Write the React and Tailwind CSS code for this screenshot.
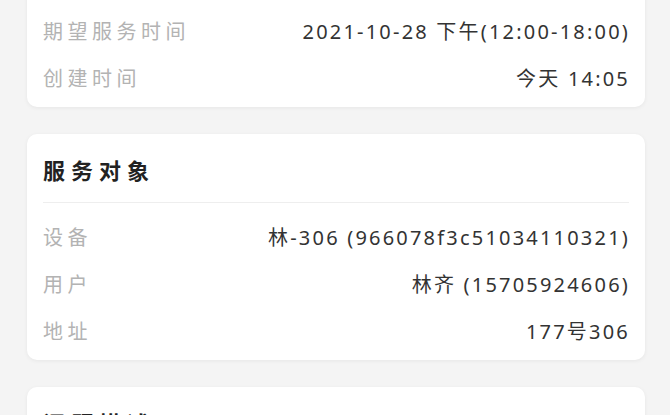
import React from 'react';

const font = { fontFamily: '"Noto Sans", "Noto Sans CJK SC", sans-serif' };

function Row({ label, value }) {
  return (
    <div className="flex h-[47px] items-center justify-between">
      <span className="text-[20px] tracking-[4.5px] text-[#b3b3b3]">{label}</span>
      <span className="-mr-[1px] text-[20px] tracking-[2.2px] text-[#333333]">{value}</span>
    </div>
  );
}

function Card({ title, children, className = '' }) {
  return (
    <div className={`rounded-[10px] bg-white px-4 shadow-[0_1px_4px_rgba(0,0,0,0.06)] ${className}`}>
      {title && (
        <div className="border-b border-[#eeeeee] pt-[18px] pb-[14px]">
          <h3 className="h-9 text-[22px] leading-9 font-bold tracking-[6px] text-[#222222]">{title}</h3>
        </div>
      )}
      {children}
    </div>
  );
}

export default function App() {
  return (
    <div className="h-[415px] w-[670px] overflow-hidden bg-[#f4f4f4]" style={font}>
      <div className="-mt-[63px] flex flex-col gap-[27px] pr-[25px] pl-[27px]">
        <Card className="pt-[24px] pb-[5px]">
          <Row label="" value="待处理" />
          <Row label="期望服务时间" value="2021-10-28 下午(12:00-18:00)" />
          <Row label="创建时间" value="今天 14:05" />
        </Card>
        <Card title="服务对象" className="pb-[5px]">
          <div className="pt-[11px]">
            <Row label="设备" value="林-306 (966078f3c51034110321)" />
            <Row label="用户" value="林齐 (15705924606)" />
            <Row label="地址" value="177号306" />
          </div>
        </Card>
        <Card title="问题描述" className="pb-6">
          <div className="py-3 text-[20px] text-[#333333]">设备无法正常开机</div>
        </Card>
      </div>
    </div>
  );
}
